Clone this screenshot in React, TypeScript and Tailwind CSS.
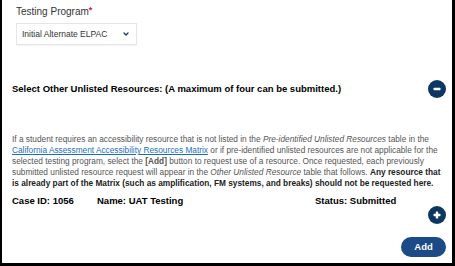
import { ChevronDown } from "lucide-react";

function CircleButton({ sign }: { sign: "minus" | "plus" }) {
  return (
    <button className="flex h-[18px] w-[18px] items-center justify-center rounded-full bg-[#0c3761]">
      <svg width="10" height="10" viewBox="0 0 10 10" aria-hidden="true">
        <rect x="1.5" y="3.8" width="7" height="2.4" rx="0.6" fill="white" />
        {sign === "plus" && <rect x="3.8" y="1.5" width="2.4" height="7" rx="0.6" fill="white" />}
      </svg>
    </button>
  );
}

export default function App() {
  return (
    <div className="h-[266px] w-[455px] overflow-hidden border-b-[3px] border-l-2 border-r-[3px] border-black bg-white font-['Liberation_Sans',Arial,sans-serif]">
      <div className="pl-[14px] pt-[5px]">
        <p className="text-[10px] leading-[14px] text-[#333]">
          Testing Program<span className="align-top text-[9px] font-bold leading-[10px] text-[#c0272d]">*</span>
        </p>
        <div className="mt-[4px] flex h-[22px] w-[121px] items-center justify-between border border-[#e6e6e6] pl-[5px] pr-[6px] shadow-[0_1px_1px_rgba(0,0,0,0.04)]">
          <span className="text-[8.5px] text-[#333]">Initial Alternate ELPAC</span>
          <ChevronDown size={8} strokeWidth={4} className="text-[#1e3a5f]" />
        </div>
      </div>

      <div className="mt-[35px] flex items-center justify-between pl-[10px] pr-[6px]">
        <h2 className="text-[9.5px] font-bold leading-[12px] text-black">
          Select Other Unlisted Resources: (A maximum of four can be submitted.)
        </h2>
        <CircleButton sign="minus" />
      </div>

      <p className="mt-[36px] pl-[10px] pr-[10px] text-[8.3px] leading-[11px] text-[#555]">
        If a student requires an accessibility resource that is not listed in the{" "}
        <i>Pre-identified Unlisted Resources</i> table in the{" "}
        <a className="text-[#1a6fc4] underline">California Assessment Accessibility Resources Matrix</a> or if
        pre-identified unlisted resources are not applicable for the selected testing program, select the{" "}
        <b>[Add]</b> button to request use of a resource. Once requested, each previously submitted unlisted
        resource request will appear in the <i>Other Unlisted Resource</i> table that follows.{" "}
        <b className="text-[#222]">
          Any resource that is already part of the Matrix (such as amplification, FM systems, and breaks) should
          not be requested here.
        </b>
      </p>

      <div className="mt-[6px] flex pl-[10px] text-[9.5px] font-bold leading-[12px] text-black">
        <span className="w-[85px]">Case ID: 1056</span>
        <span className="w-[218px]">Name: UAT Testing</span>
        <span>Status: Submitted</span>
      </div>

      <div className="mt-[-1px] flex justify-end pr-[6px]">
        <CircleButton sign="plus" />
      </div>

      <div className="mt-[13px] flex justify-end pr-[6px]">
        <button className="h-[20px] w-[45px] rounded-full bg-[#1b4a86] text-[9.5px] font-bold text-white">
          Add
        </button>
      </div>
    </div>
  );
}
